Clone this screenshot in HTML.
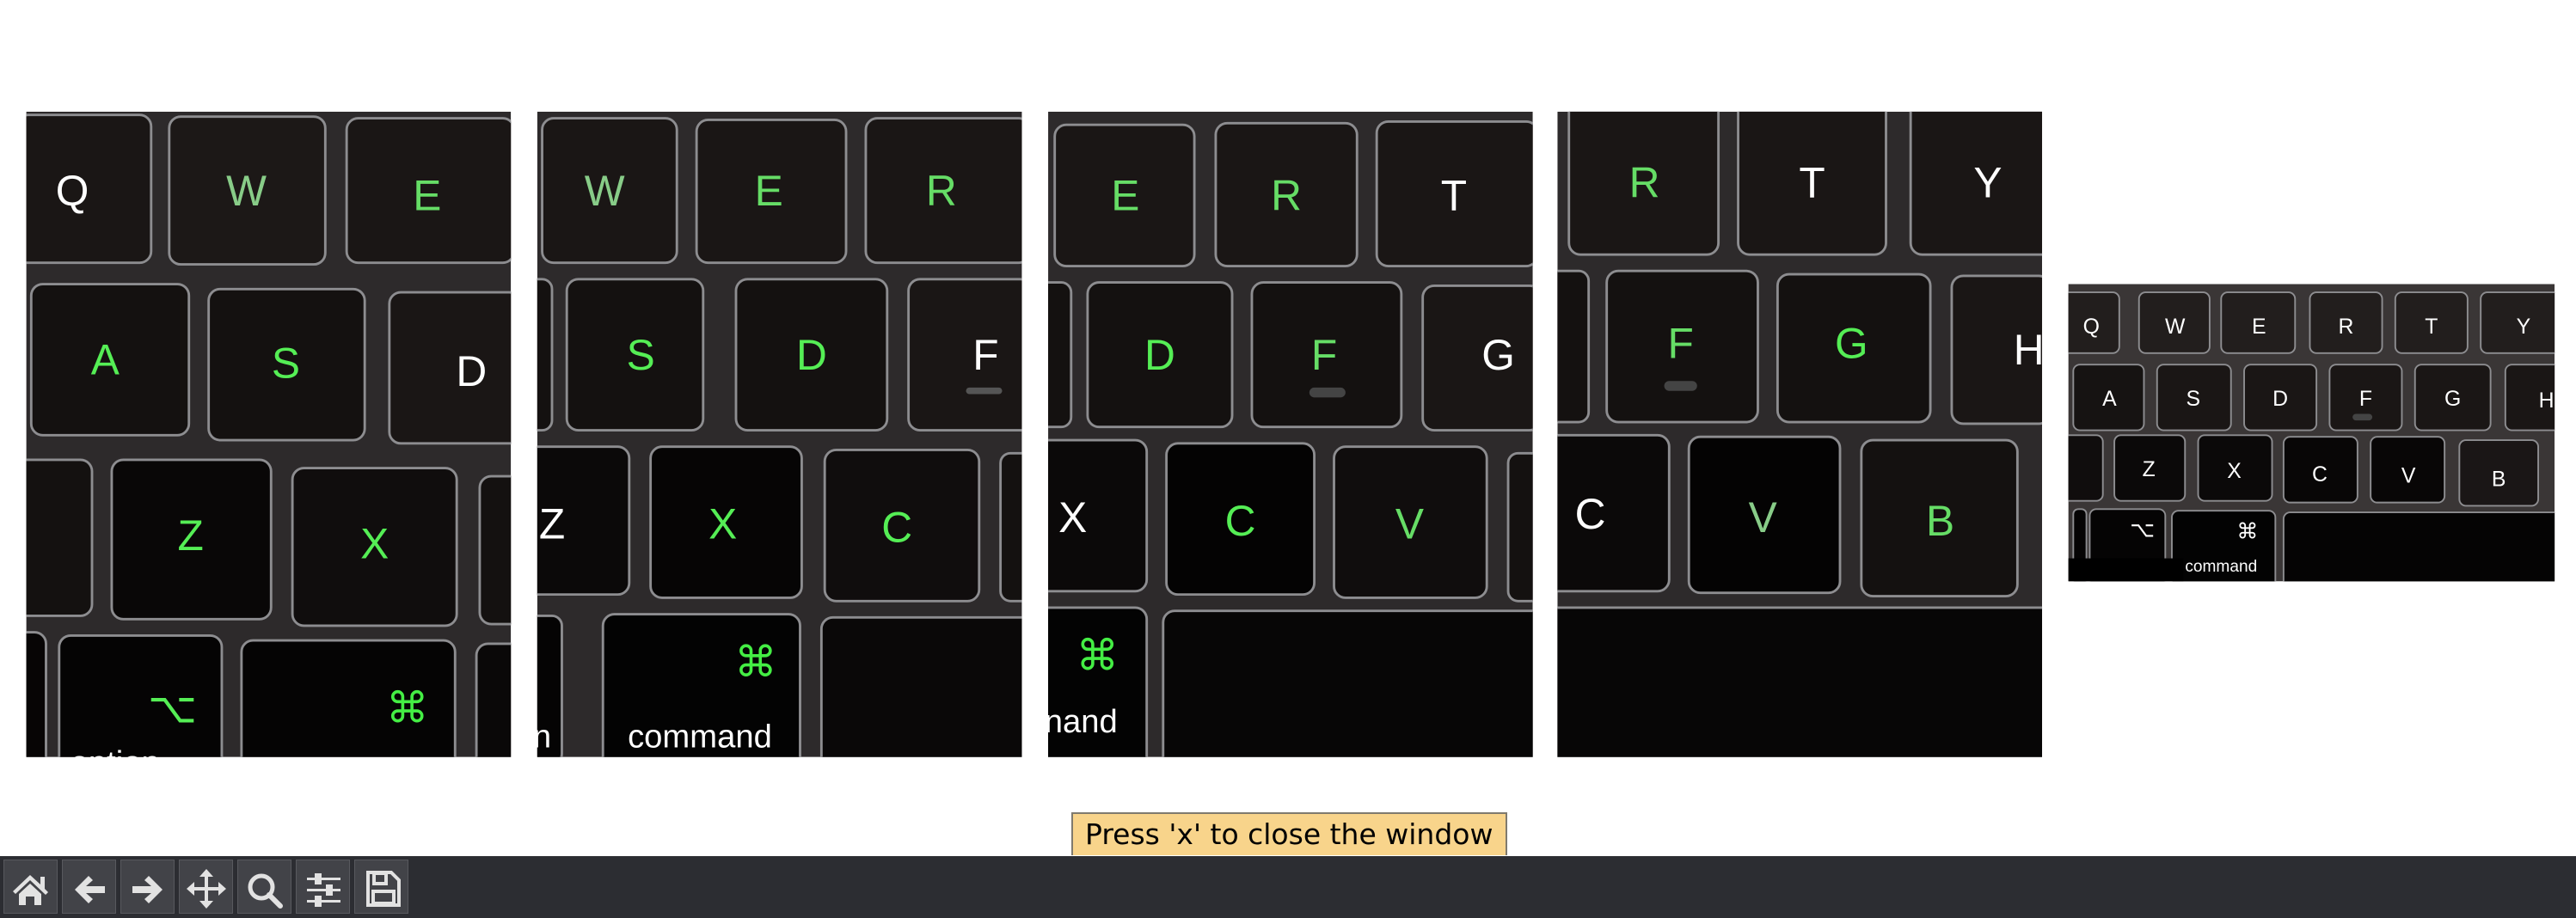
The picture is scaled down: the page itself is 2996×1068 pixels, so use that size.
<!DOCTYPE html>
<html><head><meta charset="utf-8"><style>
html,body{margin:0;padding:0;background:#fff;width:2996px;height:1068px;overflow:hidden;position:relative;font-family:"DejaVu Sans","Liberation Sans",sans-serif}
svg.main{position:absolute;left:0;top:0}
.tb{position:absolute;left:0;top:996px;width:2996px;height:72px;background:#2c2d32}
.btn{position:absolute;top:4px;width:61px;height:61px;background:#424348;border:1px solid #58595e}
.tip{position:absolute;left:1246px;top:945px;width:507px;height:50px;background:#f8d48b;border:2px solid #7f7a6e;border-bottom:none;box-sizing:border-box;font-size:33px;line-height:48px;padding-left:14px;color:#000;white-space:nowrap}
</style></head><body>
<svg class="main" width="2996" height="1068" viewBox="0 0 1568 559" preserveAspectRatio="none" font-family="Liberation Sans, sans-serif">
<defs>
<clipPath id="c1"><rect x="16" y="68" width="295" height="393"/></clipPath>
<clipPath id="c2"><rect x="327" y="68" width="295" height="393"/></clipPath>
<clipPath id="c3"><rect x="638" y="68" width="295" height="393"/></clipPath>
<clipPath id="c4"><rect x="948" y="68" width="295" height="393"/></clipPath>
<clipPath id="c5"><rect x="1259" y="173" width="296" height="181"/></clipPath>
</defs>
<g stroke="#8d8d90" stroke-width="1.5">
<g clip-path="url(#c1)">
<rect x="16" y="68" width="295" height="393" fill="#2d2a2b" stroke="none"/>
<rect x="10" y="70" width="82" height="90" rx="7" fill="#1a1615"/>
<rect x="103" y="71" width="95" height="90" rx="7" fill="#1c1817"/>
<rect x="211" y="72" width="102" height="88" rx="7" fill="#1a1615"/>
<rect x="19" y="173" width="96" height="92" rx="7" fill="#141110"/>
<rect x="127" y="176" width="95" height="92" rx="7" fill="#141110"/>
<rect x="237" y="178" width="80" height="92" rx="7" fill="#1a1615"/>
<rect x="8" y="280" width="48" height="95" rx="7" fill="#141110"/>
<rect x="68" y="280" width="97" height="97" rx="7" fill="#090707"/>
<rect x="178" y="285" width="100" height="96" rx="7" fill="#100d0d"/>
<rect x="292" y="290" width="30" height="90" rx="7" fill="#141110"/>
<rect x="8" y="385" width="20" height="90" rx="7" fill="#070505"/>
<rect x="36" y="387" width="99" height="90" rx="7" fill="#050404"/>
<rect x="147" y="390" width="130" height="90" rx="7" fill="#050404"/>
<rect x="290" y="392" width="30" height="90" rx="7" fill="#0a0808"/>
</g>
<g clip-path="url(#c2)">
<rect x="327" y="68" width="295" height="393" fill="#2d2a2b" stroke="none"/>
<rect x="330" y="72" width="82" height="88" rx="7" fill="#1a1615"/>
<rect x="424" y="73" width="91" height="87" rx="7" fill="#1a1615"/>
<rect x="527" y="72" width="100" height="88" rx="7" fill="#1a1615"/>
<rect x="320" y="170" width="16" height="92" rx="6" fill="#141110"/>
<rect x="345" y="170" width="83" height="92" rx="7" fill="#141110"/>
<rect x="448" y="170" width="92" height="92" rx="7" fill="#141110"/>
<rect x="553" y="170" width="75" height="92" rx="7" fill="#1a1615"/>
<rect x="318" y="272" width="65" height="90" rx="7" fill="#0b0909"/>
<rect x="396" y="272" width="92" height="92" rx="7" fill="#060505"/>
<rect x="502" y="274" width="94" height="92" rx="7" fill="#100d0d"/>
<rect x="609" y="276" width="20" height="90" rx="6" fill="#141110"/>
<rect x="320" y="375" width="22" height="90" rx="6" fill="#050404"/>
<rect x="367" y="374" width="120" height="95" rx="7" fill="#030303"/>
<rect x="500" y="376" width="130" height="95" rx="7" fill="#0a0808"/>
</g>
<g clip-path="url(#c3)">
<rect x="638" y="68" width="295" height="393" fill="#2d2a2b" stroke="none"/>
<rect x="642" y="76" width="85" height="86" rx="7" fill="#1a1615"/>
<rect x="740" y="75" width="86" height="87" rx="7" fill="#1a1615"/>
<rect x="838" y="74" width="98" height="88" rx="7" fill="#1a1615"/>
<rect x="630" y="172" width="22" height="88" rx="6" fill="#141110"/>
<rect x="662" y="172" width="88" height="88" rx="7" fill="#141110"/>
<rect x="762" y="172" width="91" height="88" rx="7" fill="#141110"/>
<rect x="866" y="174" width="72" height="88" rx="7" fill="#1a1615"/>
<rect x="630" y="268" width="68" height="92" rx="7" fill="#0b0909"/>
<rect x="710" y="270" width="90" height="92" rx="7" fill="#040303"/>
<rect x="812" y="272" width="93" height="92" rx="7" fill="#100d0d"/>
<rect x="918" y="276" width="20" height="90" rx="6" fill="#141110"/>
<rect x="630" y="370" width="68" height="100" rx="7" fill="#030303"/>
<rect x="708" y="372" width="235" height="100" rx="7" fill="#070606"/>
</g>
<g clip-path="url(#c4)">
<rect x="948" y="68" width="295" height="393" fill="#2d2a2b" stroke="none"/>
<rect x="955" y="60" width="91" height="95" rx="7" fill="#1a1615"/>
<rect x="1058" y="60" width="90" height="95" rx="7" fill="#1a1615"/>
<rect x="1163" y="60" width="90" height="95" rx="7" fill="#1a1615"/>
<rect x="940" y="165" width="27" height="92" rx="6" fill="#141110"/>
<rect x="978" y="165" width="92" height="92" rx="7" fill="#141110"/>
<rect x="1082" y="167" width="93" height="90" rx="7" fill="#141110"/>
<rect x="1188" y="168" width="60" height="90" rx="7" fill="#1a1615"/>
<rect x="940" y="265" width="76" height="95" rx="7" fill="#0b0909"/>
<rect x="1028" y="266" width="92" height="95" rx="7" fill="#040303"/>
<rect x="1133" y="268" width="95" height="95" rx="7" fill="#141110"/>
<rect x="940" y="370" width="310" height="100" rx="7" fill="#070606"/>
</g>
<g clip-path="url(#c5)" stroke-width="1">
<rect x="1259" y="173" width="296" height="181" fill="#3a3636" stroke="none"/>
<rect x="1252" y="178" width="38" height="37" rx="4" fill="#221e1d"/>
<rect x="1302" y="178" width="43" height="37" rx="4" fill="#221e1d"/>
<rect x="1352" y="178" width="45" height="37" rx="4" fill="#221e1d"/>
<rect x="1406" y="178" width="44" height="37" rx="4" fill="#221e1d"/>
<rect x="1458" y="178" width="44" height="37" rx="4" fill="#221e1d"/>
<rect x="1510" y="178" width="50" height="37" rx="4" fill="#221e1d"/>
<rect x="1262" y="222" width="43" height="40" rx="4" fill="#161312"/>
<rect x="1313" y="222" width="45" height="40" rx="4" fill="#1a1615"/>
<rect x="1366" y="222" width="44" height="40" rx="4" fill="#1a1615"/>
<rect x="1418" y="222" width="44" height="40" rx="4" fill="#1a1615"/>
<rect x="1470" y="222" width="46" height="40" rx="4" fill="#1a1615"/>
<rect x="1525" y="222" width="40" height="40" rx="4" fill="#1a1615"/>
<rect x="1255" y="265" width="25" height="40" rx="4" fill="#100d0d"/>
<rect x="1287" y="265" width="43" height="40" rx="4" fill="#0b0909"/>
<rect x="1338" y="265" width="45" height="40" rx="4" fill="#0b0909"/>
<rect x="1390" y="266" width="45" height="40" rx="4" fill="#080606"/>
<rect x="1443" y="266" width="45" height="40" rx="4" fill="#080606"/>
<rect x="1497" y="268" width="48" height="40" rx="4" fill="#1a1616"/>
<rect x="1262" y="310" width="8" height="50" rx="3" fill="#050404"/>
<rect x="1272" y="310" width="46" height="50" rx="4" fill="#050404"/>
<rect x="1322" y="311" width="63" height="50" rx="4" fill="#030303"/>
<rect x="1390" y="312" width="170" height="50" rx="4" fill="#050404"/>
<rect x="1259" y="340" width="70" height="14" fill="#000" stroke="none"/>
</g>
</g>
<g font-size="26" text-anchor="middle" fill="#fff">
<text x="44" y="125">Q</text><text x="150" y="125" fill="#8c8">W</text><text x="260" y="128" fill="#6d6">E</text>
<text x="64" y="228" fill="#5e5">A</text><text x="174" y="230" fill="#5e5">S</text><text x="287" y="235">D</text>
<text x="116" y="335" fill="#5e5">Z</text><text x="228" y="340" fill="#5e5">X</text>
<text x="105" y="440" fill="#5e5">⌥</text><text x="248" y="440" fill="#4e4">⌘</text>
<text x="70" y="471" font-size="20">option</text>
<text x="368" y="125" fill="#8c8">W</text><text x="468" y="125" fill="#6d6">E</text><text x="573" y="125" fill="#6d6">R</text>
<text x="390" y="225" fill="#5e5">S</text><text x="494" y="225" fill="#5e5">D</text><text x="600" y="225">F</text>
<text x="336" y="328">Z</text><text x="440" y="328" fill="#5e5">X</text><text x="546" y="330" fill="#5e5">C</text>
<text x="460" y="412" fill="#4e4">⌘</text><text x="426" y="455" font-size="20">command</text>
<text x="330" y="455" font-size="20">n</text>
<text x="685" y="128" fill="#6d6">E</text><text x="783" y="128" fill="#6d6">R</text><text x="885" y="128">T</text>
<text x="706" y="225" fill="#5e5">D</text><text x="806" y="225" fill="#6d6">F</text><text x="912" y="225">G</text>
<text x="653" y="324">X</text><text x="755" y="326" fill="#5e5">C</text><text x="858" y="328" fill="#6d6">V</text>
<text x="668" y="408" fill="#4e4">⌘</text><text x="658" y="446" font-size="20">nand</text>
<text x="1001" y="120" fill="#6d6">R</text><text x="1103" y="120">T</text><text x="1210" y="120">Y</text>
<text x="1023" y="218" fill="#6d6">F</text><text x="1127" y="218" fill="#5e5">G</text><text x="1235" y="222">H</text>
<text x="968" y="322">C</text><text x="1073" y="324" fill="#8c8">V</text><text x="1181" y="326" fill="#6d6">B</text>
<g font-size="13">
<text x="1273" y="203">Q</text><text x="1324" y="203">W</text><text x="1375" y="203">E</text><text x="1428" y="203">R</text><text x="1480" y="203">T</text><text x="1536" y="203">Y</text>
<text x="1284" y="247">A</text><text x="1335" y="247">S</text><text x="1388" y="247">D</text><text x="1440" y="247">F</text><text x="1493" y="247">G</text><text x="1550" y="248">H</text>
<text x="1308" y="290">Z</text><text x="1360" y="291">X</text><text x="1412" y="293">C</text><text x="1466" y="294">V</text><text x="1521" y="296">B</text>
<text x="1304" y="327">⌥</text><text x="1368" y="328">⌘</text><text x="1352" y="348" font-size="10">command</text>
</g>
</g>
<rect x="588" y="236" width="22" height="4" rx="2" fill="#555"/>
<rect x="797" y="236" width="22" height="6" rx="3" fill="#444"/>
<rect x="1013" y="232" width="20" height="6" rx="3" fill="#444"/>
<rect x="1432" y="252" width="12" height="4" rx="2" fill="#444"/>
</svg>
<div class="tip">Press 'x' to close the window</div>
<div class="tb">
<div class="btn" style="left:4px"><svg width="61" height="61" viewBox="0 0 61 61" fill="#e2e2e2"><path d="M10 36 L30 17 L42 28 V19 H47 V33 L51 37 L48 40 L30 23 L13 39 Z"/><path d="M17 39 L30 27 L43 39 V52 H35 V42 H25 V52 H17 Z"/></svg></div>
<div class="btn" style="left:72px"><svg width="61" height="61" viewBox="0 0 61 61" fill="#e2e2e2"><path d="M14 34 L30 18 L35 23 L27 30 H49 V38 H27 L35 45 L30 50 Z"/></svg></div>
<div class="btn" style="left:140px"><svg width="61" height="61" viewBox="0 0 61 61" fill="#e2e2e2"><path d="M48 34 L32 18 L27 23 L35 30 H13 V38 H35 L27 45 L32 50 Z"/></svg></div>
<div class="btn" style="left:208px"><svg width="61" height="61" viewBox="0 0 61 61" fill="#e2e2e2"><path d="M31 10 L39 19 H33 V31 H45 V25 L54 33 L45 41 V35 H33 V47 H39 L31 56 L23 47 H29 V35 H17 V41 L8 33 L17 25 V31 H29 V19 H23 Z"/></svg></div>
<div class="btn" style="left:276px"><svg width="61" height="61" viewBox="0 0 61 61"><circle cx="27" cy="31" r="13" fill="none" stroke="#e2e2e2" stroke-width="5"/><path d="M36 40 L49 53" stroke="#e2e2e2" stroke-width="6" stroke-linecap="round"/></svg></div>
<div class="btn" style="left:344px"><svg width="61" height="61" viewBox="0 0 61 61" fill="#e2e2e2"><rect x="12" y="20" width="39" height="3"/><rect x="12" y="33" width="39" height="3"/><rect x="12" y="46" width="39" height="3"/><rect x="21" y="15" width="8" height="13"/><rect x="34" y="28" width="8" height="13"/><rect x="21" y="41" width="8" height="13"/></svg></div>
<div class="btn" style="left:412px"><svg width="61" height="61" viewBox="0 0 61 61" fill="none" stroke="#e2e2e2" stroke-width="4"><path d="M15 14 H42 L51 23 V52 H15 Z"/><rect x="22" y="15" width="14" height="12"/><rect x="21" y="36" width="24" height="14"/></svg></div>
</div>
</body></html>
